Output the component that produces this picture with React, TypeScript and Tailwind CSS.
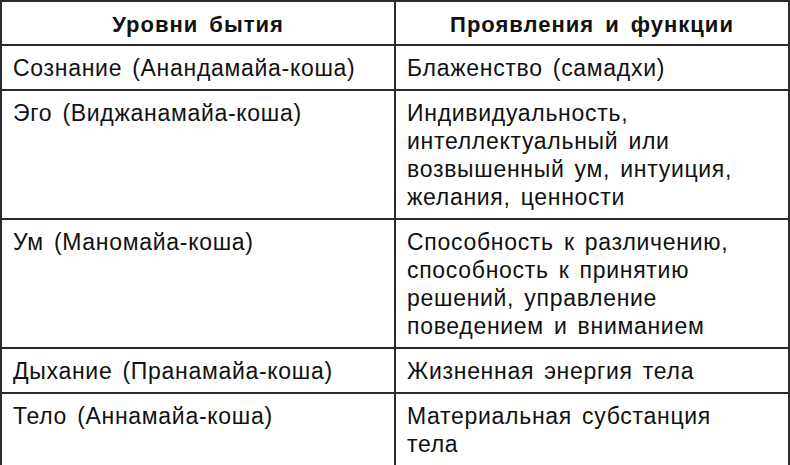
import React from 'react'

const rows: [string, string[]][] = [
  ['Сознание (Анандамайа-коша)', ['Блаженство (самадхи)']],
  ['Эго (Виджанамайа-коша)', ['Индивидуальность,', 'интеллектуальный или', 'возвышенный ум, интуиция,', 'желания, ценности']],
  ['Ум (Маномайа-коша)', ['Способность к различению,', 'способность к принятию', 'решений, управление', 'поведением и вниманием']],
  ['Дыхание (Пранамайа-коша)', ['Жизненная энергия тела']],
  ['Тело (Аннамайа-коша)', ['Материальная субстанция', 'тела']],
]

const cell = 'border-2 border-[#2b2b2b] align-top px-[11px] pt-[8px] pb-[7px] text-[23px] leading-[28px] tracking-[0.7px] [word-spacing:3px]'
const head = 'border-2 border-[#2b2b2b] text-[22px] font-bold text-center pt-[3px] tracking-[1px] [word-spacing:4px]'

export default function App() {
  return (
    <div className="w-[790px] h-[465px] bg-white text-[#111] font-['Liberation_Sans',Arial,sans-serif]">
      <table className="w-[790px] table-fixed border-collapse border-2 border-[#2b2b2b]">
        <colgroup>
          <col className="w-[394px]" />
          <col />
        </colgroup>
        <thead>
          <tr className="h-[44px]">
            <th className={head}>Уровни бытия</th>
            <th className={head}>Проявления и функции</th>
          </tr>
        </thead>
        <tbody>
          {rows.map(([left, right]) => (
            <tr key={left}>
              <td className={cell}>{left}</td>
              <td className={cell}>
                {right.map((l) => (
                  <div key={l}>{l}</div>
                ))}
              </td>
            </tr>
          ))}
        </tbody>
      </table>
    </div>
  )
}
